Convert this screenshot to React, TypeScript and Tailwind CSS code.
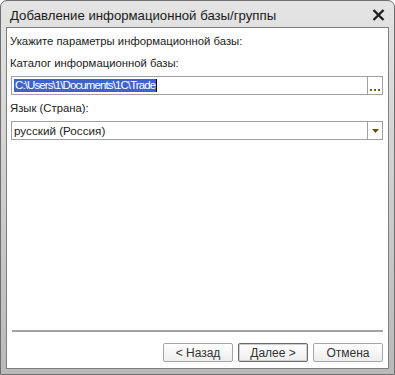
import React from "react";

const font = { fontFamily: '"Liberation Sans", Arial, sans-serif' };

function DialogButton({
  label,
  isDefault = false,
}: {
  label: string;
  isDefault?: boolean;
}) {
  return (
    <button
      className={`w-[70px] h-[19px] rounded-[2px] border bg-gradient-to-b from-white to-[#ededed] text-[12px] leading-none text-[#333] flex items-center justify-center ${
        isDefault
          ? "border-[#6a6a6a] shadow-[inset_0_0_0_1px_#cfcfcf]"
          : "border-[#a5a5a5]"
      }`}
    >
      {label}
    </button>
  );
}

export default function App() {
  return (
    <div className="w-[395px] h-[375px] bg-white" style={font}>
      <div className="h-full rounded-t-[7px] border border-[#6f6f6f] bg-gradient-to-b from-[#e4e4e4] via-[#cfcfcf] to-[#b9b9b9] flex flex-col">
        {/* Title bar */}
        <div className="h-[26px] shrink-0 flex items-center justify-between pl-[9px] pr-[9px]">
          <span className="text-[13.2px] text-[#1a1a1a] pt-[3px]">
            Добавление информационной базы/группы
          </span>
          <svg width="13" height="12" viewBox="0 0 13 12" className="mt-[2px]">
            <path
              d="M1.5 1L11.5 11M11.5 1L1.5 11"
              stroke="#202020"
              strokeWidth="2.4"
            />
          </svg>
        </div>

        {/* Client area */}
        <div className="flex-1 mx-[5px] mb-[5px] border border-[#7e7e7e] bg-white flex flex-col pl-[4px] pr-[5px] text-[11.3px] text-[#222]">
          <div className="mt-[6px] leading-[15px] -ml-[1px]">
            Укажите параметры информационной базы:
          </div>
          <div className="mt-[7px] leading-[15px] -ml-[1px]">
            Каталог информационной базы:
          </div>
          <div className="mt-[5px] h-[19px] border border-[#a0a0a0] flex items-stretch">
            <div className="flex-1 flex items-center pl-[2px]">
              <span className="bg-[#3d63cc] text-white text-[11.5px] leading-[13px] px-[1px] tracking-[-0.9px]">
                C:\Users\1\Documents\1C\Trade
              </span>
              <span className="w-[1px] h-[13px] bg-black" />
            </div>
            <div className="w-[15px] border-l border-[#a0a0a0] flex items-end justify-center gap-[2px] pb-[3px]">
              <span className="w-[2px] h-[2px] bg-[#7a5a12]" />
              <span className="w-[2px] h-[2px] bg-[#7a5a12]" />
              <span className="w-[2px] h-[2px] bg-[#7a5a12]" />
            </div>
          </div>
          <div className="mt-[6px] leading-[15px] -ml-[1px]">Язык (Страна):</div>
          <div className="mt-[5px] h-[19px] border border-[#a0a0a0] flex items-stretch">
            <div className="flex-1 flex items-center pl-[2px] text-[11.7px]">русский (Россия)</div>
            <div className="w-[15px] border-l border-[#a0a0a0] flex items-center justify-center">
              <svg width="7" height="4" viewBox="0 0 7 4">
                <path d="M0 0H7L3.5 4Z" fill="#6b4c0f" />
              </svg>
            </div>
          </div>

          <div className="flex-1" />

          <div className="h-[2px] bg-[#a3a3a3] ml-[1px]" />
          <div className="flex justify-end gap-[5px] pt-[11px] pb-[6px]">
            <DialogButton label="< Назад" />
            <DialogButton label="Далее >" isDefault />
            <DialogButton label="Отмена" />
          </div>
        </div>
      </div>
    </div>
  );
}
